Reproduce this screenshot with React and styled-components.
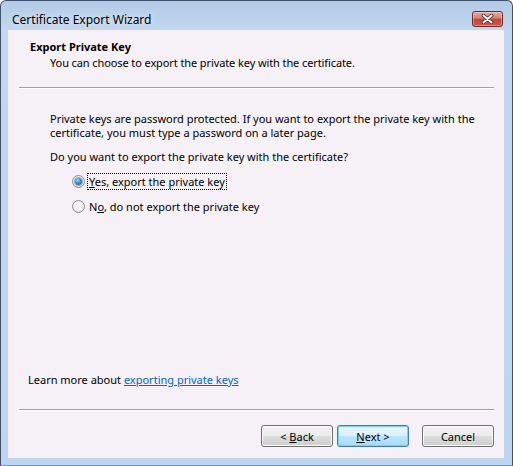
import styled, { createGlobalStyle } from "styled-components";

const GlobalStyle = createGlobalStyle`
  html, body {
    margin: 0;
    padding: 0;
    background: #ffffff;
  }
  body {
    font-family: "Noto Sans", "Open Sans", sans-serif;
    font-size: 11px;
    color: #000;
  }
`;

const Window = styled.div`
  box-sizing: border-box;
  width: 513px;
  height: 466px;
  display: flex;
  flex-direction: column;
  border: 1px solid #40536c;
  border-bottom-color: #33b4d4;
  border-radius: 6px 6px 0 0;
  background: linear-gradient(180deg, #b3cae6 0px, #c3d7ee 29px, #bfd5ee 100%);
  padding: 0 8px 7px 7px;
`;

const TitleBar = styled.div`
  height: 29px;
  box-sizing: border-box;
  display: flex;
  align-items: center;
  justify-content: space-between;
  padding: 7px 1px 0 4px;
`;

const Title = styled.span`
  font-size: 12px;
  color: #000;
  text-shadow: 0 0 6px rgba(255, 255, 255, 0.9);
`;

const CloseButton = styled.button`
  width: 31px;
  height: 16px;
  padding: 0;
  display: flex;
  align-items: center;
  justify-content: center;
  border: 1px solid #6b2a26;
  border-radius: 3px;
  background: linear-gradient(180deg, #e9a99b 0%, #d6806f 45%, #c0473a 50%, #c9574a 100%);
  box-shadow: inset 0 0 0 1px rgba(255, 255, 255, 0.35);
`;

const Content = styled.div`
  flex: 1;
  display: flex;
  flex-direction: column;
  background: #f6f1f6;
`;

const Header = styled.div`
  padding: 10px 0 0 22px;
`;

const HeaderTitle = styled.div`
  font-weight: bold;
  line-height: 13px;
`;

const HeaderSub = styled.div`
  margin-top: 3px;
  padding-left: 20px;
  line-height: 13px;
  letter-spacing: -0.1px;
`;

const Separator = styled.div`
  margin: ${(p) => p.$top || 0}px 10px 0 11px;
  height: 1px;
  background: #a0a0a0;
  border-bottom: 1px solid #ffffff;
`;

const Body = styled.div`
  flex: 1;
  padding: 23px 20px 0 42px;
`;

const Para = styled.p`
  margin: 0;
  line-height: 14px;
`;

const Question = styled(Para)`
  margin-top: 10px;
`;

const RadioList = styled.div`
  margin-top: 8px;
  padding-left: 22px;
  display: flex;
  flex-direction: column;
  gap: 7px;
`;

const RadioRow = styled.label`
  height: 18px;
  display: flex;
  align-items: center;
  gap: 2px;
`;

const RadioDot = styled.span`
  box-sizing: border-box;
  width: 13px;
  height: 13px;
  border-radius: 50%;
  border: 1px solid #8d8f91;
  background: radial-gradient(circle at 50% 40%, #ffffff 0%, #f1f1f1 45%, #d6d6d6 100%);
  display: flex;
  align-items: center;
  justify-content: center;
  &::after {
    content: "";
    display: ${(p) => (p.$checked ? "block" : "none")};
    width: 7px;
    height: 7px;
    border-radius: 50%;
    background: radial-gradient(circle at 40% 35%, #a9dcff 0%, #3d8fd4 40%, #1c4f8a 100%);
    box-shadow: 0 0 0 1px rgba(30, 70, 120, 0.4);
  }
`;

const RadioText = styled.span`
  line-height: 13px;
  padding: 1px 1px;
  border: 1px dotted ${(p) => (p.$focused ? "#000" : "transparent")};
`;

const Learn = styled.div`
  padding: 0 0 0 20px;
  line-height: 13px;
`;

const Link = styled.a`
  color: #0066cc;
  text-decoration: underline;
  cursor: pointer;
`;

const Footer = styled.div`
  display: flex;
  justify-content: flex-end;
  gap: 4px;
  padding: 14px 10px 11px 0;
`;

const Button = styled.button`
  box-sizing: border-box;
  width: 72px;
  height: 22px;
  margin-left: ${(p) => p.$gap || 0}px;
  font-family: inherit;
  font-size: 11px;
  color: #000;
  border-radius: 3px;
  border: 1px solid ${(p) => (p.$default ? "#3c7fb1" : "#707070")};
  background: ${(p) =>
    p.$default
      ? "linear-gradient(180deg, #eaf6fd 0%, #d9f0fc 50%, #bee6fd 51%, #a7d9f5 100%)"
      : "linear-gradient(180deg, #f2f2f2 0%, #ebebeb 50%, #dddddd 51%, #cfcfcf 100%)"};
  box-shadow: inset 0 0 0 1px ${(p) => (p.$default ? "#7ad0f8" : "#fbfbfb")};
  padding: 0;
`;

const Key = styled.u`
  text-decoration: underline;
`;

function CloseGlyph() {
  return (
    <svg width="13" height="10" viewBox="0 0 13 10">
      <path d="M2.5 1.5 L10.5 8.5 M10.5 1.5 L2.5 8.5" stroke="#4a2320" strokeWidth="3.6" strokeLinecap="round" />
      <path d="M2.5 1.5 L10.5 8.5 M10.5 1.5 L2.5 8.5" stroke="#ffffff" strokeWidth="2" strokeLinecap="round" />
    </svg>
  );
}

export default function App() {
  return (
    <>
      <GlobalStyle />
      <Window>
        <TitleBar>
          <Title>Certificate Export Wizard</Title>
          <CloseButton aria-label="Close">
            <CloseGlyph />
          </CloseButton>
        </TitleBar>
        <Content>
          <Header>
            <HeaderTitle>Export Private Key</HeaderTitle>
            <HeaderSub>You can choose to export the private key with the certificate.</HeaderSub>
          </Header>
          <Separator $top={18} />
          <Body>
            <Para>
              Private keys are password protected. If you want to export the private key with the
              <br />
              certificate, you must type a password on a later page.
            </Para>
            <Question>Do you want to export the private key with the certificate?</Question>
            <RadioList>
              <RadioRow>
                <RadioDot $checked />
                <RadioText $focused>
                  <Key>Y</Key>es, export the private key
                </RadioText>
              </RadioRow>
              <RadioRow>
                <RadioDot />
                <RadioText>
                  N<Key>o</Key>, do not export the private key
                </RadioText>
              </RadioRow>
            </RadioList>
          </Body>
          <Learn>
            Learn more about <Link>exporting private keys</Link>
          </Learn>
          <Separator $top={23} />
          <Footer>
            <Button>
              &lt; <Key>B</Key>ack
            </Button>
            <Button $default>
              <Key>N</Key>ext &gt;
            </Button>
            <Button $gap={9}>Cancel</Button>
          </Footer>
        </Content>
      </Window>
    </>
  );
}
